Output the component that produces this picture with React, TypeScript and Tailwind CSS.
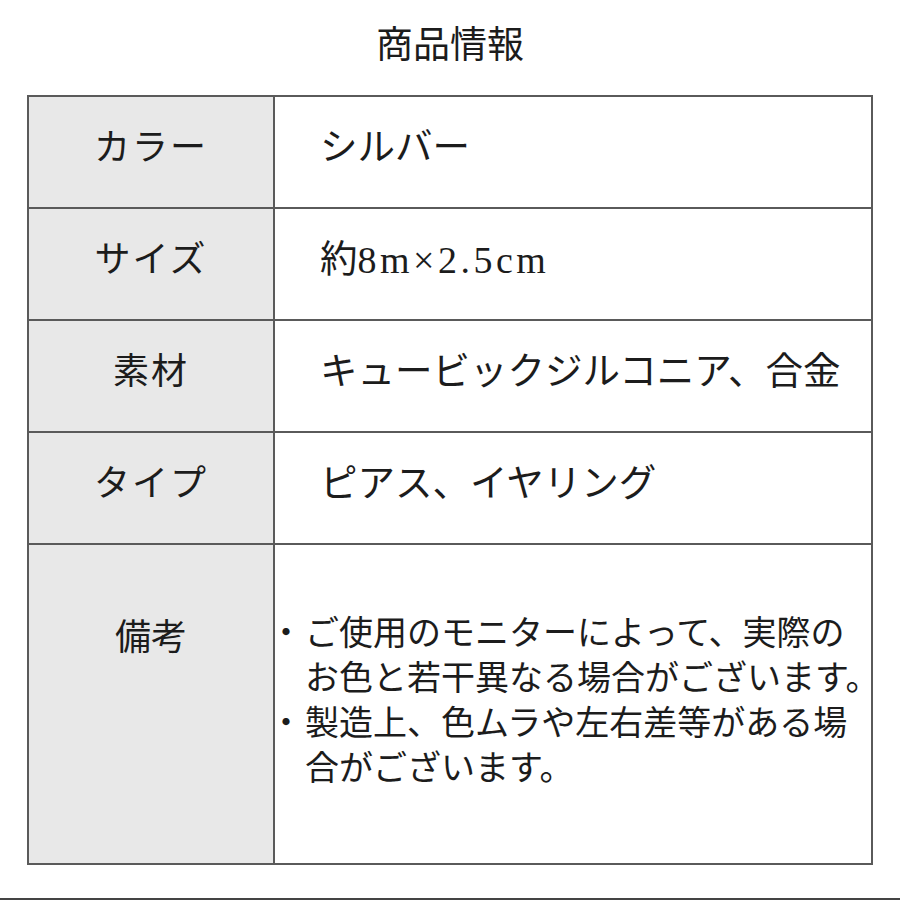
const rows = [
  { label: "カラー", value: <>シルバー</> },
  {
    label: "サイズ",
    value: (
      <>
        約<span className="text-[38px] tracking-[3.5px]">8m×2.5cm</span>
      </>
    ),
  },
  { label: "素材", value: <>キュービックジルコニア、合金</> },
  { label: "タイプ", value: <>ピアス、イヤリング</> },
];

const font = {
  fontFamily: "'Liberation Serif', 'Noto Sans CJK JP', serif",
};

const notes = [
  ["ご使用のモニターによって、実際の", "お色と若干異なる場合がございます。"],
  ["製造上、色ムラや左右差等がある場", "合がございます。"],
];

export default function App() {
  return (
    <div
      className="w-[900px] h-[900px] bg-white text-[#1c1c1c] flex flex-col overflow-hidden"
      style={font}
    >
      <h1 className="h-[95px] flex items-center justify-center text-[37px] pb-[4px]">
        商品情報
      </h1>

      <div className="mx-[27px] w-[846px] border-2 border-[#5a5a5a] grid grid-cols-[246px_minmax(0,1fr)]">
        {rows.map((r) => (
          <div key={r.label} className="contents">
            <div className="h-[112px] bg-[#e8e8e8] border-b-2 border-r-2 border-[#5a5a5a] flex items-center justify-center text-[36px] pb-[8px] tracking-[2px]">
              {r.label}
            </div>
            <div className="h-[112px] min-w-0 border-b-2 border-[#5a5a5a] flex items-center pl-[45px] text-[37.5px] pb-[8px] whitespace-nowrap">
              {r.value}
            </div>
          </div>
        ))}
        <div className="h-[318px] bg-[#e8e8e8] border-r-2 border-[#5a5a5a] flex justify-center pt-[66px] text-[36px]">
          備考
        </div>
        <div className="h-[318px] min-w-0 pt-[66px] text-[34px] leading-[45px] whitespace-nowrap">
          {notes.map((lines, i) => (
            <div key={i} className="flex">
              <span className="w-[36px] -ml-[6px] shrink-0">・</span>
              <span className="flex flex-col">
                {lines.map((l) => (
                  <span key={l}>{l}</span>
                ))}
              </span>
            </div>
          ))}
        </div>
      </div>

      <div className="mt-auto h-[2px] bg-[#444]" />
    </div>
  );
}
